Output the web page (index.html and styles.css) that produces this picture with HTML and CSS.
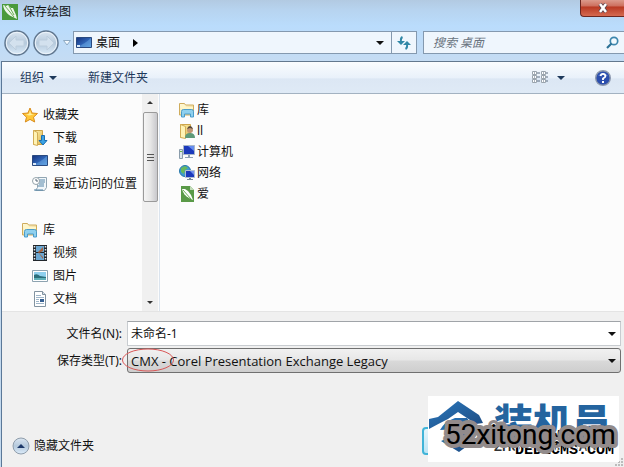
FILE: index.html
```html
<!DOCTYPE html>
<html lang="zh-CN">
<head>
<meta charset="utf-8">
<title>保存绘图</title>
<link rel="stylesheet" href="styles.css">
</head>
<body>
<svg class="defs" aria-hidden="true">
  <defs>
    <linearGradient id="gold" x2="1" y2="1"><stop offset="0" stop-color="#fff3b0"/><stop offset="1" stop-color="#dfb650"/></linearGradient>
    <linearGradient id="pale" x2="1" y2="1"><stop offset="0" stop-color="#fffbe0"/><stop offset="1" stop-color="#ecd184"/></linearGradient>
    <linearGradient id="screen" x2="1" y2="1"><stop offset="0" stop-color="#15327c"/><stop offset=".5" stop-color="#2e62b4"/><stop offset="1" stop-color="#5aa0e0"/></linearGradient>
    <linearGradient id="orb" x2="0" y2="1"><stop offset="0" stop-color="#dbe6f1"/><stop offset=".5" stop-color="#b5c9dc"/><stop offset="1" stop-color="#dcecfa"/></linearGradient>
    <linearGradient id="brand" x2="1" y2="1"><stop offset="0" stop-color="#2a78bd"/><stop offset="1" stop-color="#1d4a80"/></linearGradient>
    <symbol id="leaf" viewBox="0 0 16 16"><path fill="#4a9a3c" d="M0 0h16v16H0z"/><path fill="#eef7ea" d="M1 1l3 1 2-1 3 3 2 0 3 7 1 4-4-2C6 11 2 7 1 1z"/><path d="M3 2l9 11M7 2l5 9" stroke="#6cae55" fill="none"/></symbol>
    <symbol id="file-leaf" viewBox="0 0 16 16"><path fill="#5a9a48" d="M2 0h9l4 4v12H2z"/><path fill="#c3dcb9" d="M11 0v4h4z"/><path fill="#fff" d="M3 3l3 0 3 2 3 4 2 5-4-2C6 10 4 7 3 3z"/><path d="M4 4l8 9" stroke="#6cae55" fill="none"/></symbol>
    <symbol id="desktop" viewBox="0 0 16 16"><path fill="url(#screen)" stroke="#2a4a80" d="M.5 2.500h15v10H.5z"/><path d="M1 12C6 10 11 7 15 3v9z" fill="#72b0e8" opacity=".45"/><path fill="#d9e8f8" d="M1 10h3v2H1z"/></symbol>
    <symbol id="library" viewBox="0 0 16 16"><path fill="url(#pale)" stroke="#cfac5c" d="M.5 13V1.500h5l1 1.500h8V13z"/><path fill="#fff6c8" d="M2 3h4l1 2h7v2H2z"/><path fill="#8fd0ee" stroke="#4a9ccb" d="M2.500 15V9.500q0-2 2-2h8q2 0 2 2V15h-3v-3h-6v3z"/></symbol>
    <symbol id="star" viewBox="0 0 16 16"><path fill="#ffc83a" stroke="#d98c1c" stroke-linejoin="round" d="M8 1l2 5 5.500.5-4 3.700L12.700 15 8 12.400 3.300 15l1.200-4.800-4-3.700L6 6z"/><path fill="#fff0a0" d="M8 3.500L9 7l3 .5-5 1-3-1L7 7z"/></symbol>
    <symbol id="download" viewBox="0 0 16 16"><path fill="url(#gold)" stroke="#cda54b" d="M1.500.5h9v14h-9z"/><path fill="#fff3b4" stroke="#d2ad57" d="M1.500.5l4 2v13l-4-1z"/><path fill="#3aa2e4" stroke="#1a6db1" d="M9.500 5.500h3v5H15L11 15 7 10.500h2.500z"/></symbol>
    <symbol id="recent" viewBox="0 0 16 16"><path fill="#f2f7fa" stroke="#91a5b2" d="M5.500 1.500h9v10l-2 3h-9l2-3z"/><path d="M7 4h6M7 6h6M7 8h5M6 10h6M2 14h9" stroke="#5585a8"/><circle cx="4" cy="5" r="3.500" fill="#fff" stroke="#96a4ab"/><path d="M4 3v2h2" fill="none" stroke="#567"/></symbol>
    <symbol id="video" viewBox="0 0 16 16"><path fill="#22272c" d="M1 0h14v16H1z"/><path fill="#6ba7d2" d="M4 1h8v6H4zM4 8h8v7H4z"/><path fill="#a6633f" d="M6 7l5-5v4l-4 2 4 4v2z"/><path stroke="#e1e8ed" stroke-dasharray="1.500 1.500" stroke-width="1.500" d="M2.500 1v15M13.500 1v15"/></symbol>
    <symbol id="image" viewBox="0 0 16 16"><path fill="#fff" stroke="#8da3b0" d="M.5 2.500h15v11H.5z"/><path fill="#8fd0ee" d="M2 4h12v5H2z"/><path fill="#2a6f7c" d="M2 7q3-2 6 1l6 1v3H2z"/><path fill="#5eb0b8" d="M2 10h12v2H2z"/></symbol>
    <symbol id="doc" viewBox="0 0 16 16"><path fill="#fff" stroke="#8293a0" d="M2.500.5h8l3 3v12h-11z"/><path fill="#d8e2ea" stroke="#8293a0" d="M10.500.5v3h3"/><path d="M4 4.500h5M4 6.500h8M4 8.500h3M4 10.500h3M4 12.500h8" stroke="#9fb6c9"/><path fill="#365f91" d="M8 8h4v3H8z"/></symbol>
    <symbol id="user" viewBox="0 0 16 16"><path fill="url(#gold)" stroke="#cda54b" d="M1.500 1.500h10v13h-10z"/><path fill="#fff3b4" stroke="#d2ad57" d="M1.500 1.500l5 2v12l-5-1z"/><circle cx="11" cy="7" r="3" fill="#c29673"/><path fill="#57483a" d="M8 6q1-3 3-3t3 3l-3-1z"/><path fill="#5f9a79" d="M6 15q0-5 5-5t5 5z"/></symbol>
    <symbol id="computer" viewBox="0 0 16 16"><path fill="#dce5ed" stroke="#8a9cab" d="M.5 5.500h3v9h-3z"/><path fill="#1b39bb" stroke="#a8b6c8" d="M4.500 1.500h11v9h-11z"/><path fill="#658cf0" d="M9 2h6v5z"/><path fill="#8fa1b4" d="M9 11h2v2h3v1H6v-1h3z"/><path fill="#67b74a" d="M1 7h2v1H1z"/></symbol>
    <symbol id="network" viewBox="0 0 16 16"><circle cx="6" cy="6" r="5.500" fill="#3e9bd2" stroke="#2978a9"/><path fill="#68b95c" d="M2 3l4-2 3 2-3 2-1 4-3-2zM7 7l3-1v4H7z"/><path fill="#1b39bb" stroke="#b1bfd0" d="M6.500 5.500h9v7h-9z"/><path fill="#7291ed" d="M11 6h4v4z"/><path fill="#78899b" d="M10 13h2v1h2v1H8v-1h2z"/></symbol>
  </defs>
</svg>
<main class="dialog">
  <header class="titlebar">
    <svg class="icon"><use href="#leaf"/></svg>
    <h1>保存绘图</h1>
    <button class="close" aria-label="关闭"><svg width="12" height="10" viewBox="0 0 12 10"><path d="M3 1l6 8M9 1L3 9" stroke="#59404a" stroke-width="4"/><path d="M3 1l6 8M9 1L3 9" stroke="#fff" stroke-width="2.500"/></svg></button>
  </header>
  <nav class="navbar">
    <div class="history">
      <button aria-label="后退"><svg width="26" height="26" viewBox="0 0 26 26"><circle cx="13" cy="13" r="12" fill="url(#orb)" stroke="#61778f" stroke-width="1.500"/><circle cx="13" cy="13" r="10.700" fill="none" stroke="#edf4fb"/><path d="M5 13l7-7v4h8v6h-8v4z" fill="#d3e1ee" stroke="#bccddd"/></svg></button>
      <button aria-label="前进"><svg width="26" height="26" viewBox="0 0 26 26"><circle cx="13" cy="13" r="12" fill="url(#orb)" stroke="#61778f" stroke-width="1.500"/><circle cx="13" cy="13" r="10.700" fill="none" stroke="#edf4fb"/><path d="M21 13l-7-7v4H6v6h8v4z" fill="#d3e1ee" stroke="#bccddd"/></svg></button>
      <button aria-label="最近位置"><svg width="8" height="6" viewBox="0 0 8 6"><path d="M.5.5h7L4 5z" fill="#f4faff" stroke="#8da9c2"/></svg></button>
    </div>
    <div class="address">
      <svg class="icon"><use href="#desktop"/></svg>
      <button class="crumb">桌面</button>
      <svg width="5" height="8" viewBox="0 0 5 8"><path d="M0 0l5 4-5 4z"/></svg>
      <button class="address-menu" aria-label="展开地址"><i class="arrow"></i></button>
      <button class="refresh" aria-label="刷新"><svg width="14" height="14" viewBox="0 0 14 14"><path d="M5.500 1Q3.500 2 4 5M8.500 13q2-1 1.500-4" fill="none" stroke="#3187a6" stroke-width="2"/><path d="M0 5h8L4 9zM6 9h8l-4-4z" fill="#3187a6"/></svg></button>
    </div>
    <div class="search">
      <input type="text" placeholder="搜索 桌面" aria-label="搜索 桌面">
      <svg width="13" height="13" viewBox="0 0 13 13"><circle cx="8" cy="5" r="3.700" fill="#f2faff" stroke="#3d86ad" stroke-width="1.700"/><path d="M5.500 7.500L1 12" stroke="#2c7196" stroke-width="2.200"/></svg>
    </div>
  </nav>
  <div class="toolbar">
    <button>组织 <i class="arrow"></i></button>
    <button>新建文件夹</button>
    <button class="views" aria-label="更改视图"><svg width="16" height="13" viewBox="0 0 16 13"><path d="M.5.5h4v3h-4zM.5 4.500h4v3h-4zM.5 8.500h4v3h-4zM9.500.5h4v3h-4zM9.500 4.500h4v3h-4zM9.500 8.500h4v3h-4z" fill="#fff" stroke="#9aa4ad"/><path d="M2 2h1M2 6h1M2 10h1M11 2h1M11 6h1M11 10h1M5 2h3M5 6h3M5 10h3M14 2h2M14 6h2M14 10h2" stroke="#5c6d80"/></svg><i class="arrow"></i></button>
    <button class="help" aria-label="帮助"><svg width="16" height="16" viewBox="0 0 16 16"><circle cx="8" cy="8" r="7.300" fill="#2b4ead" stroke="#8c98ad" stroke-width="1.400"/><path d="M3 6q5-6 10 0-5-2-10 0" fill="#7894da"/><path d="M5.500 6Q6 3.800 8 3.800T10.500 6Q10.500 7.300 8 8.500V10" fill="none" stroke="#fff" stroke-width="1.800"/><path d="M7 11h2v2H7z" fill="#fff"/></svg></button>
  </div>
  <section class="browser">
    <div class="sidebar">
      <ul class="tree">
        <li class="root"><svg class="icon"><use href="#star"/></svg>收藏夹</li>
        <li><svg class="icon"><use href="#download"/></svg>下载</li>
        <li><svg class="icon"><use href="#desktop"/></svg>桌面</li>
        <li><svg class="icon"><use href="#recent"/></svg>最近访问的位置</li>
        <li class="root group"><svg class="icon"><use href="#library"/></svg>库</li>
        <li><svg class="icon"><use href="#video"/></svg>视频</li>
        <li><svg class="icon"><use href="#image"/></svg>图片</li>
        <li><svg class="icon"><use href="#doc"/></svg>文档</li>
      </ul>
      <div class="scrollbar"><i class="small-arrow up"></i><div class="thumb"><i></i><i></i><i></i></div><i class="small-arrow down"></i></div>
    </div>
    <ul class="files">
      <li><svg class="icon"><use href="#library"/></svg>库</li>
      <li><svg class="icon"><use href="#user"/></svg>ll</li>
      <li><svg class="icon"><use href="#computer"/></svg>计算机</li>
      <li><svg class="icon"><use href="#network"/></svg>网络</li>
      <li><svg class="icon"><use href="#file-leaf"/></svg>爱</li>
    </ul>
  </section>
  <form class="form">
    <label for="name">文件名(N):</label>
    <div class="field"><input id="name" type="text" value="未命名-1"><i class="arrow"></i></div>
    <label for="type">保存类型(T):</label>
    <div class="field">
      <select id="type"><option>CMX - Corel Presentation Exchange Legacy</option></select><i class="arrow"></i>
      <svg class="mark" width="54" height="24" viewBox="0 0 54 24"><ellipse cx="27" cy="12" rx="25.500" ry="11" fill="none" stroke="#d95757"/></svg>
    </div>
  </form>
  <footer class="footer">
    <button class="hide"><svg width="18" height="18" viewBox="0 0 18 18"><circle cx="9" cy="9" r="8" fill="url(#orb)" stroke="#8f9dab"/><path d="M5 11l4-4 4 4z" fill="#1d3868"/></svg>隐藏文件夹</button>
    <button class="save" aria-label="保存"></button>
    <svg class="grip" width="9" height="9" viewBox="0 0 9 9"><path d="M6 0h2v2H6zM3 3h2v2H3zM6 3h2v2H6zM0 6h2v2H0zM3 6h2v2H3zM6 6h2v2H6z" fill="#bcbcbc"/></svg>
  </footer>
  <svg class="watermark" width="192" height="72" viewBox="0 0 192 72">
    <path d="M0 2h191v66H0z" fill="#fff"/>
    <path d="M1 25l9-2L30 7l21 14 4 8-7 1-18-12-10 7q-8 4-19 10z" fill="url(#brand)"/>
    <path d="M12 36q5-9 15-12h12l7 9v14L31 58 13 47l7-3 11 5 6-5-16-4 8-5z" fill="url(#brand)"/>
    <text class="brand" x="66" y="43">装机员</text>
    <text class="brand-sub" x="66" y="57">ZHUANGJIYUAN</text>
    <text class="cms" x="105" y="46">POWER BY</text>
    <text class="cms" x="87" y="60">DEDECMS.COM</text>
    <text class="site" x="17" y="50">52xitong.com</text>
  </svg>
</main>
</body>
</html>
```
FILE: styles.css
```css
* { box-sizing: border-box; }
body {
  margin: 0;
  font: 12px/16px "Noto Sans", "Noto Sans CJK SC", sans-serif;
  color: #111;
}
button, input, select { font: inherit; color: inherit; }
button { display: flex; align-items: center; padding: 0; border: 0; background: none; }
ul { margin: 0; padding: 0; list-style: none; }
.defs { position: absolute; width: 0; height: 0; }
.icon { width: 16px; height: 16px; flex: none; }
.arrow { border: 4px solid transparent; border-top-color: currentColor; border-bottom: 0; }

.dialog {
  position: relative;
  display: flex;
  flex-direction: column;
  min-height: 100vh;
  overflow: hidden;
  background: #f0f0f0;
}
.dialog::before {
  content: "";
  position: absolute;
  inset: 61px auto 0 0;
  width: 2px;
  background: linear-gradient(90deg, #c3d9ee 50%, #5b7898 50%);
  z-index: 1;
}
.titlebar {
  display: flex;
  gap: 5px;
  height: 26px;
  padding: 4px 0 0 2px;
  background: linear-gradient(#b2cae2, #b7d4f0 40%, #badcfc);
}
.titlebar h1 { margin: 0; font-size: 12px; line-height: 16px; font-weight: 400; }
.close {
  width: 44px;
  height: 17px;
  margin: -4px 0 0 auto;
  justify-content: center;
  border: 1px solid #6b2620;
  border-width: 0 0 1px 1px;
  border-radius: 0 0 0 4px;
  background: linear-gradient(#dc9a8c, #ce7261 35%, #b93a24 45%, #d56a50);
}
.navbar {
  display: flex;
  align-items: center;
  height: 35px;
  padding-bottom: 2px;
  background: linear-gradient(#badcfc, #c5dcf3);
}
.history { display: flex; gap: 3px; width: 73px; padding-left: 4px; }
.history button:last-child { margin-left: 1px; }
.address, .search {
  display: flex;
  align-items: center;
  height: 23px;
  border: 1px solid #8499af;
  background: #eff6fd;
}
.address { flex: 1; padding-left: 2px; }
.crumb { margin: 0 13px 0 4px; }
.address-menu { margin: 0 7px 0 auto; }
.refresh { width: 25px; height: 21px; justify-content: center; border-left: 1px solid #8499af; }
.search { width: 201px; margin-left: 6px; padding: 0 5px 0 9px; border-right: 0; }
.search input { flex: 1; min-width: 0; padding: 0; border: 0; outline: 0; background: none; font-style: italic; }
.search input::placeholder { color: #6a7480; opacity: 1; }
.toolbar {
  display: flex;
  align-items: center;
  height: 33px;
  padding: 0 13px 0 20px;
  border-top: 1px solid #63788e;
  border-bottom: 1px solid #a3b2c1;
  background: linear-gradient(#fafcfe, #e9f1fa 50%, #dce7f4 55%, #dfeaf6);
  color: #1e395b;
}
.toolbar button { gap: 5px; margin-right: 31px; }
.toolbar .views { gap: 9px; margin: 0 30px 0 auto; }
.toolbar .help { margin: 0; }
.browser { display: flex; height: 217px; background: #fcfcfc; }
.sidebar { display: flex; width: 160px; border-right: 1px solid #dbe4ee; }
.tree { flex: 1; padding-top: 9px; white-space: nowrap; }
.tree li, .files li { display: flex; align-items: center; }
.tree li { gap: 5px; height: 23px; padding-left: 32px; }
.tree .root { padding-left: 22px; }
.tree .group { margin-top: 23px; }
.scrollbar {
  display: flex;
  flex-direction: column;
  align-items: center;
  width: 16px;
  margin-right: 1px;
  padding: 7px 0;
  background: #f0f0f0;
}
.small-arrow { border: 3px solid transparent; }
.up { border-top: 0; border-bottom-color: #333; }
.down { margin-top: auto; border-bottom: 0; border-top-color: #333; }
.thumb {
  display: flex;
  flex-direction: column;
  justify-content: center;
  align-items: center;
  gap: 2px;
  width: 15px;
  height: 90px;
  margin-top: 8px;
  border: 1px solid #9a9a9a;
  border-radius: 2px;
  background: linear-gradient(90deg, #f5f5f5, #e6e6e6 50%, #c8c8cc);
}
.thumb i { width: 7px; height: 1px; background: #555; }
.files { flex: 1; padding: 5px 0 0 19px; }
.files li { gap: 2px; height: 21px; }
.form {
  display: grid;
  grid-template-columns: 122px 1fr;
  gap: 2px 5px;
  align-items: center;
  padding: 9px 3px 0 0;
  border-top: 1px solid #e4e4e4;
}
.form label { text-align: right; white-space: nowrap; }
.field { position: relative; display: flex; }
.field input, .field select {
  width: 100%;
  height: 25px;
  padding: 0 3px 2px;
  border: 1px solid #c8ccd0;
  border-top-color: #a0a4a8;
  background: #fff;
  outline: 0;
}
.field select {
  appearance: none;
  padding-bottom: 0;
  border: 1px solid #707070;
  border-radius: 3px;
  background: linear-gradient(#f1f1f1, #e7e7e7 48%, #d9d9d9 52%, #cecece);
  font: 13px "Open Sans", sans-serif;
}
.field .arrow { position: absolute; right: 5px; top: 11px; pointer-events: none; }
.mark { position: absolute; left: -6px; top: 0; pointer-events: none; }
.footer { display: flex; align-items: center; margin-top: auto; height: 42px; padding-left: 12px; position: relative; }
.hide { gap: 4px; }
.save {
  position: absolute;
  left: 422px;
  top: 2px;
  width: 78px;
  height: 28px;
  border: 2px solid #40b4d8;
  border-radius: 4px;
  background: linear-gradient(#e5f5fb, #bce5f5);
}
.grip { position: absolute; right: 0; bottom: 0; }
.watermark { position: absolute; right: 4px; bottom: 1px; }
.brand { font: 900 39px "Noto Sans CJK SC", sans-serif; fill: #24649f; }
.brand-sub { font: 700 13px "Liberation Sans", sans-serif; fill: #333; }
.cms {
  font: 700 15px "Liberation Mono", monospace;
  fill: #000;
  stroke: #fff;
  stroke-width: 2px;
  paint-order: stroke;
}
.site {
  font: 28px Roboto, "Liberation Sans", sans-serif;
  fill: #000;
  stroke: #928b8b;
  stroke-width: 8px;
  stroke-linejoin: round;
  paint-order: stroke;
}
```
